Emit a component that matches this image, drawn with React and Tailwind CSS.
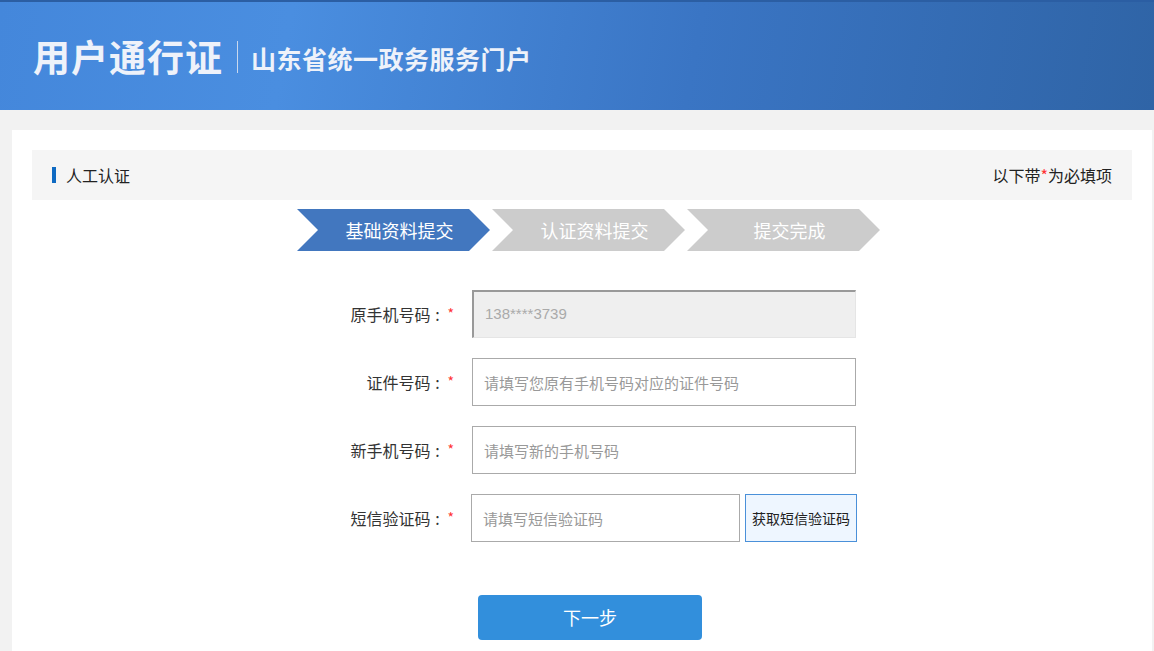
import React from 'react';

const font = { fontFamily: '"Microsoft YaHei", "Noto Sans CJK SC", sans-serif' };

const steps = [
  { label: '基础资料提交', active: true },
  { label: '认证资料提交', active: false },
  { label: '提交完成', active: false },
];

const Field = ({ label, children }) => (
  <div className="flex items-center h-[48px] mb-[20px]">
    <div className="w-[424px] flex justify-end items-center pr-[2px] text-[16px] text-[#333]">
      {label}<span className="w-[14px] text-center">:</span><span className="text-[#f33] text-[14px] ml-[3px] -mt-[2px]">*</span>
    </div>
    <div className="ml-[16px] flex items-center h-full">{children}</div>
  </div>
);

const App = () => {
  return (
    <div className="w-[1154px] h-[651px] overflow-hidden bg-[#f2f2f2]" style={font}>
      {/* Header */}
      <div className="h-[110px] border-t-2 border-[#2b5ea3] bg-[linear-gradient(100deg,#4487db_0%,#4a8ee0_25%,#3a75c4_60%,#2f64a6_100%)] flex items-center pl-[33px]">
        <h1 className="text-[37px] font-bold text-[#eef2fa] tracking-[1px] leading-none">用户通行证</h1>
        <div className="w-[1px] h-[32px] bg-[#c9d8ee] ml-[14px] mr-[13px] mt-[2px]"></div>
        <p className="text-[25px] font-bold text-[#eef2fa] tracking-[0.5px] leading-none mt-[4px]">山东省统一政务服务门户</p>
      </div>

      {/* Card */}
      <div className="mt-[20px] ml-[12px] w-[1140px] h-[600px] bg-white px-[20px] pt-[20px]">
        <div className="h-[50px] bg-[#f5f5f5] flex items-center justify-between px-[20px]">
          <div className="flex items-center">
            <span className="w-[4px] h-[16px] bg-[#0f6ac2]"></span>
            <span className="ml-[10px] text-[16px] text-[#222]">人工认证</span>
          </div>
          <div className="text-[16px] text-[#222]">
            以下带<span className="text-[#f33]">*</span>为必填项
          </div>
        </div>

        {/* Steps */}
        <div className="flex ml-[265px] mt-[9px] gap-[2px]">
          {steps.map((s) => (
            <div
              key={s.label}
              className={`w-[193px] h-[42px] flex items-center justify-center pl-[12px] text-[18px] text-white [clip-path:polygon(0_0,172px_0,193px_21px,172px_42px,0_42px,21px_21px)] ${s.active ? 'bg-[#4277bf]' : 'bg-[#cccccc]'}`}
            >
              {s.label}
            </div>
          ))}
        </div>

        {/* Form */}
        <div className="mt-[39px]">
          <Field label="原手机号码">
            <div className="w-[384px] h-[48px] bg-[#efefef] border-t-2 border-l-2 border-[#999] border-r border-b border-r-[#e5e5e5] border-b-[#e5e5e5] flex items-center pl-[11px] text-[15px] text-[#aaa]" style={{ fontFamily: '"Liberation Sans", Arial, sans-serif' }}>
              138****3739
            </div>
          </Field>
          <Field label="证件号码">
            <input className="w-[384px] h-[48px] border border-[#aaa] px-[11px] text-[15px] outline-none placeholder:text-[#999]" placeholder="请填写您原有手机号码对应的证件号码" />
          </Field>
          <Field label="新手机号码">
            <input className="w-[384px] h-[48px] border border-[#aaa] px-[11px] text-[15px] outline-none placeholder:text-[#999]" placeholder="请填写新的手机号码" />
          </Field>
          <Field label="短信验证码">
            <input className="-ml-[1px] w-[269px] h-[48px] border border-[#aaa] px-[11px] text-[15px] outline-none placeholder:text-[#999]" placeholder="请填写短信验证码" />
            <button className="ml-[5px] w-[112px] h-[48px] border border-[#4a90d9] bg-[#eef6ff] text-[14px] text-[#222]">
              获取短信验证码
            </button>
          </Field>
        </div>

        <button className="mt-[33px] ml-[446px] w-[224px] h-[45px] rounded-[4px] bg-[#328fdc] text-white text-[18px]">
          下一步
        </button>
      </div>
    </div>
  );
};

export default App;
